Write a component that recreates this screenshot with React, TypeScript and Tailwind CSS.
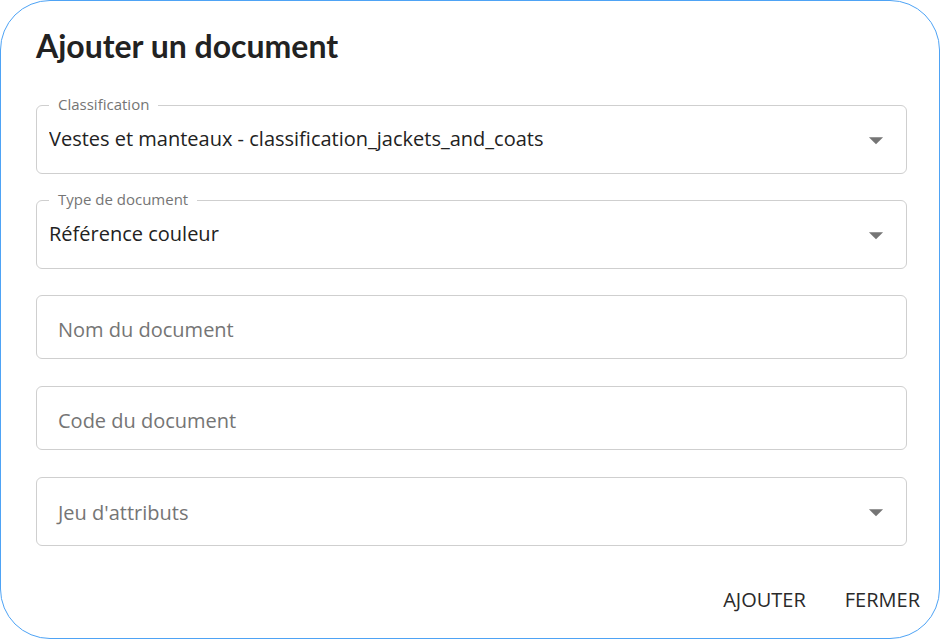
import type { ReactNode } from 'react';

const body = { fontFamily: '"Open Sans", "Liberation Sans", sans-serif' };

function Caret() {
    return (
        <svg viewBox="0 0 24 24" className="h-[34px] w-[34px] shrink-0 fill-[#757575]">
            <path d="M7 10l5 5 5-5z" />
        </svg>
    );
}

interface FieldProps {
    label?: string;
    placeholder?: string;
    value?: string;
    select?: boolean;
    tall?: boolean;
}

/**
 * Outlined field, with the label sitting in a notch of the top border.
 */
function Field({ label, placeholder, value, select, tall }: FieldProps) {
    let inner: ReactNode;
    if (value) {
        inner = <span className="flex-1 truncate pb-[2px] text-[20px] text-[#222]">{value}</span>;
    } else {
        inner = (
            <span
                className={
                    'flex-1 truncate pl-[9px] text-[20px] text-[#757575] ' + (tall ? 'pt-[2px]' : 'pt-[5px]')
                }
            >
                {placeholder}
            </span>
        );
    }

    return (
        <div
            className={
                'relative flex items-center rounded-[6px] border border-[#cfcfcf] pl-[12px] pr-[13px] ' +
                (tall ? 'h-[69px]' : 'h-[64px]')
            }
        >
            {label && (
                <span className="absolute left-[12px] top-[-12px] bg-white px-[9px] text-[15px] leading-[20px] text-[#757575]">
                    {label}
                </span>
            )}
            {inner}
            {select && <Caret />}
        </div>
    );
}

export default function App() {
    return (
        <div className="h-[640px] w-[940px] bg-white" style={body}>
            <div className="flex h-[639px] w-[940px] flex-col rounded-[50px] border border-[#4ea3f5] pl-[35px] pr-[32px] pt-[25px]">
                <h2
                    className="text-[32px] font-bold leading-[40px] text-[#222]"
                    style={{ fontFamily: 'Lato, "Liberation Sans", sans-serif' }}
                >
                    Ajouter un document
                </h2>

                <div className="mt-[39px] flex flex-col">
                    <Field label="Classification" value="Vestes et manteaux - classification_jackets_and_coats" select tall />
                    <div className="h-[26px]" />
                    <Field label="Type de document" value="Référence couleur" select tall />
                    <div className="h-[26px]" />
                    <Field placeholder="Nom du document" />
                    <div className="h-[27px]" />
                    <Field placeholder="Code du document" />
                    <div className="h-[27px]" />
                    <Field placeholder="Jeu d'attributs" select tall />
                </div>

                <div className="-mr-[13px] mt-[39px] flex justify-end gap-[39px] text-[20px] leading-[30px] text-[#2a2a2a]">
                    <button className="uppercase">Ajouter</button>
                    <button className="uppercase">Fermer</button>
                </div>
            </div>
        </div>
    );
}
